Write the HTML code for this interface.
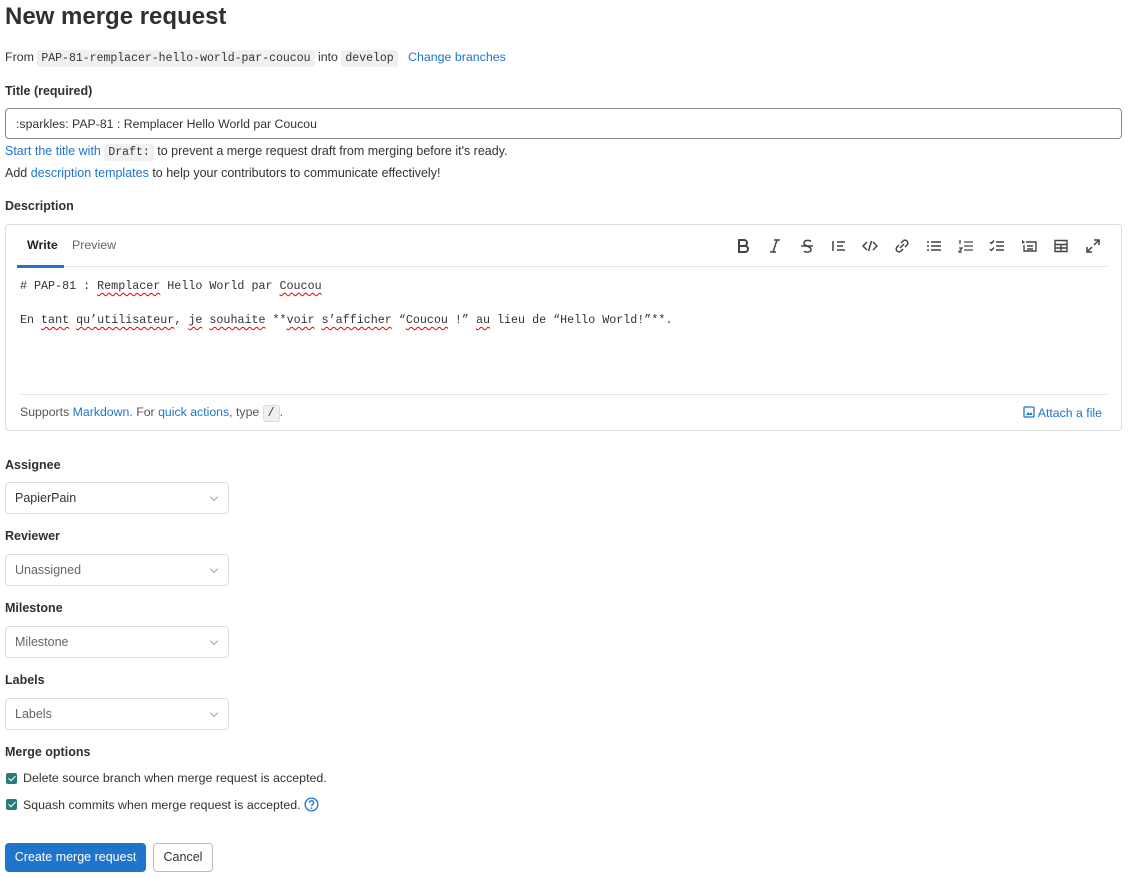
<!DOCTYPE html>
<html><head><meta charset="utf-8"><style>
*{box-sizing:border-box}
body{margin:0;width:1128px;height:878px;overflow:hidden;background:#fff;font-family:"Liberation Sans",sans-serif;font-size:12.4px;color:#333}
.a{position:absolute}
a,.lnk{color:#1f75cb;text-decoration:none}
h1{position:absolute;left:5px;top:3px;margin:0;font-size:24px;font-weight:bold;color:#303030}
code{font-family:"Liberation Mono",monospace;font-size:11.5px;background:#f0f0f0;border-radius:3px;padding:2px 4px;color:#333}
.lbl{position:absolute;left:5px;font-weight:bold;font-size:12.5px;color:#303030}
.sel{position:absolute;left:5px;width:224px;height:32px;border:1px solid #ddd;border-radius:4px;padding:8px 9px;font-size:12.5px;color:#666}
.sel.d{color:#333}
.sel:after{content:"";position:absolute;right:11px;top:11px;width:5px;height:5px;border-right:1px solid #aaa;border-bottom:1px solid #aaa;transform:rotate(45deg)}
.ed{font-family:"Liberation Mono",monospace;font-size:11.7px;color:#333;position:absolute;left:20px}
.sq{text-decoration:underline wavy #e00;text-decoration-thickness:1px;text-underline-offset:3px}
.cb{position:absolute;left:6px;width:11px;height:11px;background:#2a7a79;border-radius:2px}
.cb:after{content:"";position:absolute;left:3.5px;top:1px;width:3px;height:6px;border-right:1.6px solid #fff;border-bottom:1.6px solid #fff;transform:rotate(45deg)}
.tb svg{position:absolute;top:238px}
</style></head><body>
<h1>New merge request</h1>
<div class="a" style="left:5px;top:50px">From <code>PAP-81-remplacer-hello-world-par-coucou</code> into <code>develop</code> &nbsp; <span class="lnk">Change branches</span></div>
<div class="lbl" style="top:84px">Title (required)</div>
<div class="a" style="left:5px;top:108px;width:1117px;height:31px;border:1px solid #888;border-radius:4px;padding:8px 10px;font-size:12.3px">:sparkles: PAP-81 : Remplacer Hello World par Coucou</div>
<div class="a" style="left:5px;top:144px;font-size:12.5px"><span class="lnk">Start the title with</span> <code>Draft:</code> to prevent a merge request draft from merging before it's ready.</div>
<div class="a" style="left:5px;top:166px;font-size:12.5px">Add <span class="lnk">description templates</span> to help your contributors to communicate effectively!</div>
<div class="lbl" style="top:199px">Description</div>
<div class="a" style="left:5px;top:224px;width:1117px;height:207px;border:1px solid #ddd;border-radius:4px"></div>
<div class="a" style="left:17px;top:266px;width:1090px;height:1px;background:#e5e5e5"></div>
<div class="a" style="left:17px;top:265px;width:47px;height:3px;background:#1f75cb"></div>
<div class="a" style="left:27px;top:238px;font-weight:bold;color:#222">Write</div>
<div class="a" style="left:72px;top:238px;color:#666">Preview</div>
<div class="tb" style="color:#555">
<svg style="left:736px" width="14" height="16" viewBox="0 0 14 16"><path d="M3 2h5a3 3 0 0 1 0 6H3zM3 8h6a3 3 0 0 1 0 6H3z" fill="none" stroke="#444" stroke-width="2"/></svg>
<svg style="left:768px" width="14" height="16" viewBox="0 0 14 16"><path d="M6 2h6M2 14h6M9 2L5 14" fill="none" stroke="#444" stroke-width="1.5"/></svg>
<svg style="left:800px" width="14" height="16" viewBox="0 0 14 16"><path d="M11 3.5C10 2 4 1.5 4 5s7 3 7 6.5-6 3-7 1.5M1 8h12" fill="none" stroke="#444" stroke-width="1.5"/></svg>
<svg style="left:831px" width="16" height="16" viewBox="0 0 16 16"><path d="M2 3v10M6 4h8M6 8h6M6 12h8" stroke="#444" stroke-width="1.5"/></svg>
<svg style="left:862px" width="16" height="16" viewBox="0 0 16 16"><path d="M5 4L1 8l4 4M11 4l4 4-4 4M9.5 3L6.5 13" fill="none" stroke="#444" stroke-width="1.5"/></svg>
<svg style="left:894px" width="16" height="16" viewBox="0 0 16 16"><path d="M7 5l2-2a2.8 2.8 0 0 1 4 4l-2 2M9 11l-2 2a2.8 2.8 0 0 1-4-4l2-2M6 10l4-4" fill="none" stroke="#444" stroke-width="1.5"/></svg>
<svg style="left:926px" width="16" height="16" viewBox="0 0 16 16"><path d="M1 4h2M1 8h2M1 12h2M5 4h10M5 8h10M5 12h10" stroke="#444" stroke-width="1.5"/></svg>
<svg style="left:958px" width="16" height="16" viewBox="0 0 16 16"><path d="M2 2v4M1 10h3l-3 4h3M6 4h9M6 8h9M6 12h9" fill="none" stroke="#444" stroke-width="1.3"/></svg>
<svg style="left:989px" width="16" height="16" viewBox="0 0 16 16"><path d="M1 4l1.5 1.5L5 2.5M1 11l1.5 1.5L5 9.5M7 4h8M7 8h8M7 12h8" fill="none" stroke="#444" stroke-width="1.4"/></svg>
<svg style="left:1021px" width="16" height="16" viewBox="0 0 16 16"><path d="M1 2l3 2-3 2z" fill="#444"/><path d="M5 4h10v9H3V7M6 8h6M6 11h6" fill="none" stroke="#444" stroke-width="1.4"/></svg>
<svg style="left:1053px" width="16" height="16" viewBox="0 0 16 16"><path d="M2 2.5h12v11H2zM2 6.5h12M2 10h12M8 6.5v7" fill="none" stroke="#444" stroke-width="1.4"/></svg>
<svg style="left:1085px" width="16" height="16" viewBox="0 0 16 16"><path d="M9 2h5v5M14 2l-5 5M7 14H2V9M2 14l5-5" fill="none" stroke="#444" stroke-width="1.5"/></svg>
</div>
<div class="ed" style="top:279px"># PAP-81 : <span class="sq">Remplacer</span> Hello World par <span class="sq">Coucou</span></div>
<div class="ed" style="top:313px">En <span class="sq">tant</span> <span class="sq">qu’utilisateur</span>, <span class="sq">je</span> <span class="sq">souhaite</span> **<span class="sq">voir</span> <span class="sq">s’afficher</span> “<span class="sq">Coucou</span> !” <span class="sq">au</span> lieu de “Hello World!”**.</div>
<div class="a" style="left:20px;top:394px;width:1087px;height:1px;background:#e5e5e5"></div>
<div class="a" style="left:20px;top:405px;font-size:12.3px;color:#555">Supports <span class="lnk">Markdown</span>. For <span class="lnk">quick actions</span>, type <code style="border:1px solid #ddd;padding:1px 4px">/</code>.</div>
<div class="a" style="left:1023px;top:406px;font-size:12.3px" ><svg width="12" height="12" viewBox="0 0 12 12" style="vertical-align:-1px"><rect x="1" y="1" width="10" height="10" rx="1" fill="none" stroke="#1f75cb" stroke-width="1.3"/><path d="M3 9l2-3 1.5 2L8 6l1.5 3z" fill="#1f75cb"/></svg> <span class="lnk">Attach a file</span></div>
<div class="lbl" style="top:458px">Assignee</div>
<div class="sel d" style="top:482px">PapierPain</div>
<div class="lbl" style="top:529px">Reviewer</div>
<div class="sel" style="top:554px">Unassigned</div>
<div class="lbl" style="top:601px">Milestone</div>
<div class="sel" style="top:626px">Milestone</div>
<div class="lbl" style="top:673px">Labels</div>
<div class="sel" style="top:698px">Labels</div>
<div class="lbl" style="top:745px">Merge options</div>
<div class="cb" style="top:773px"></div>
<div class="a" style="left:23px;top:771px">Delete source branch when merge request is accepted.</div>
<div class="cb" style="top:799px"></div>
<div class="a" style="left:23px;top:797px">Squash commits when merge request is accepted. <svg width="15" height="15" viewBox="0 0 16 16" style="vertical-align:-3px"><circle cx="8" cy="8" r="6.8" fill="none" stroke="#1f75cb" stroke-width="1.4"/><path d="M5.8 6.2a2.2 2.2 0 1 1 3 2c-.6.3-.8.7-.8 1.4" fill="none" stroke="#1f75cb" stroke-width="1.4"/><circle cx="8" cy="11.8" r=".9" fill="#1f75cb"/></svg></div>
<div class="a" style="left:5px;top:843px;width:141px;height:29px;background:#1f75cb;border-radius:4px;color:#fff;text-align:center;line-height:28px;font-size:12.5px">Create merge request</div>
<div class="a" style="left:153px;top:843px;width:60px;height:29px;border:1px solid #bbb;border-radius:4px;text-align:center;line-height:26px;font-size:12.5px">Cancel</div>
</body></html>
